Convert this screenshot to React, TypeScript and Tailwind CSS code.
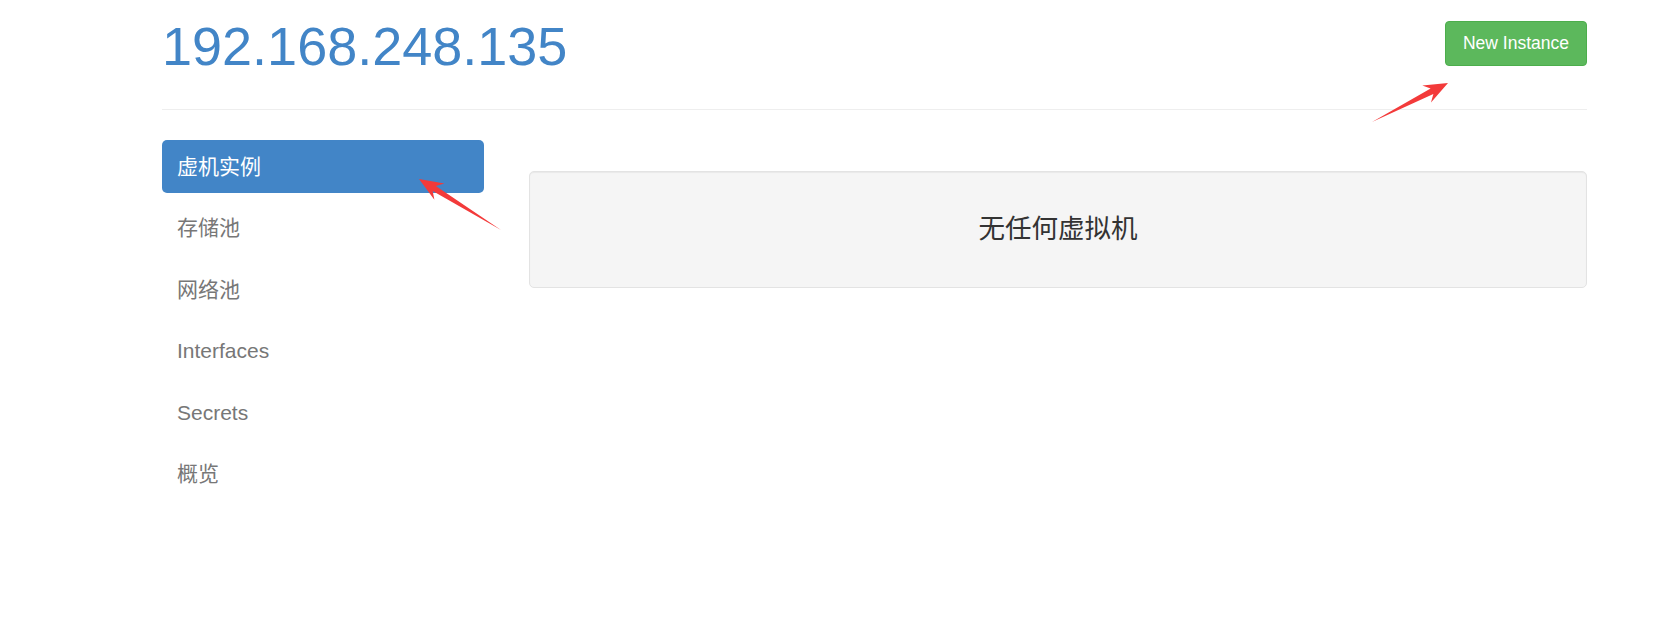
import React from "react";

const FONT = '"Liberation Sans", Arial, "Noto Sans CJK SC", sans-serif';

function Arrow({ tail, tip, head = 24, barb = 9.5, shaft = 3 }: { tail: [number, number]; tip: [number, number]; head?: number; barb?: number; shaft?: number }) {
  const dx = tip[0] - tail[0];
  const dy = tip[1] - tail[1];
  const L = Math.sqrt(dx * dx + dy * dy);
  const ux = dx / L;
  const uy = dy / L;
  const nx = -uy;
  const ny = ux;
  const p = (a: number, b: number) => `${tail[0] + ux * a + nx * b},${tail[1] + uy * a + ny * b}`;
  const pts = [
    p(0, 0),
    p(L - head + 6, -shaft),
    p(L - head, -barb),
    p(L, 0),
    p(L - head, barb),
    p(L - head + 6, shaft),
  ].join(" ");
  return <polygon points={pts} fill="#f33a3a" />;
}

const navItems = ["虚机实例", "存储池", "网络池", "Interfaces", "Secrets", "概览"];

export default function App() {
  return (
    <div className="relative w-[1658px] h-[630px] bg-white overflow-hidden" style={{ fontFamily: FONT }}>
      <div className="ml-[162px] w-[1425px]">
        <div className="flex items-start justify-between h-[110px] border-b border-[#eeeeee]">
          <h1 className="mt-[16px] text-[54px] leading-[60px] text-[#4285c7] font-normal">192.168.248.135</h1>
          <button className="mt-[21px] h-[45px] px-[17px] rounded-[4px] bg-[#5cb85c] border border-[#4cae4c] text-white text-[17.5px] leading-none">
            New Instance
          </button>
        </div>
        <div className="flex items-start mt-[30px]">
          <div className="w-[322px] flex flex-col gap-[8.5px]">
            {navItems.map((t, i) => (
              <div
                key={t}
                className={
                  i === 0
                    ? "h-[53px] px-[15px] flex items-center rounded-[5px] bg-[#4285c7] text-white text-[21px]"
                    : "h-[53px] px-[15px] flex items-center rounded-[5px] text-[#777777] text-[21px]"
                }
              >
                {t}
              </div>
            ))}
          </div>
          <div className="ml-[45px] mt-[31px] w-[1058px] h-[117px] flex items-center justify-center rounded-[5px] bg-[#f5f5f5] border border-[#e3e3e3] shadow-[inset_0_1px_1px_rgba(0,0,0,0.05)]">
            <span className="text-[26.5px] text-[#333333]">无任何虚拟机</span>
          </div>
        </div>
      </div>
      <svg className="absolute inset-0 pointer-events-none" width="1658" height="630">
        <Arrow tail={[1372, 122]} tip={[1448, 83]} />
        <Arrow tail={[501, 230]} tip={[419, 179]} />
      </svg>
    </div>
  );
}
